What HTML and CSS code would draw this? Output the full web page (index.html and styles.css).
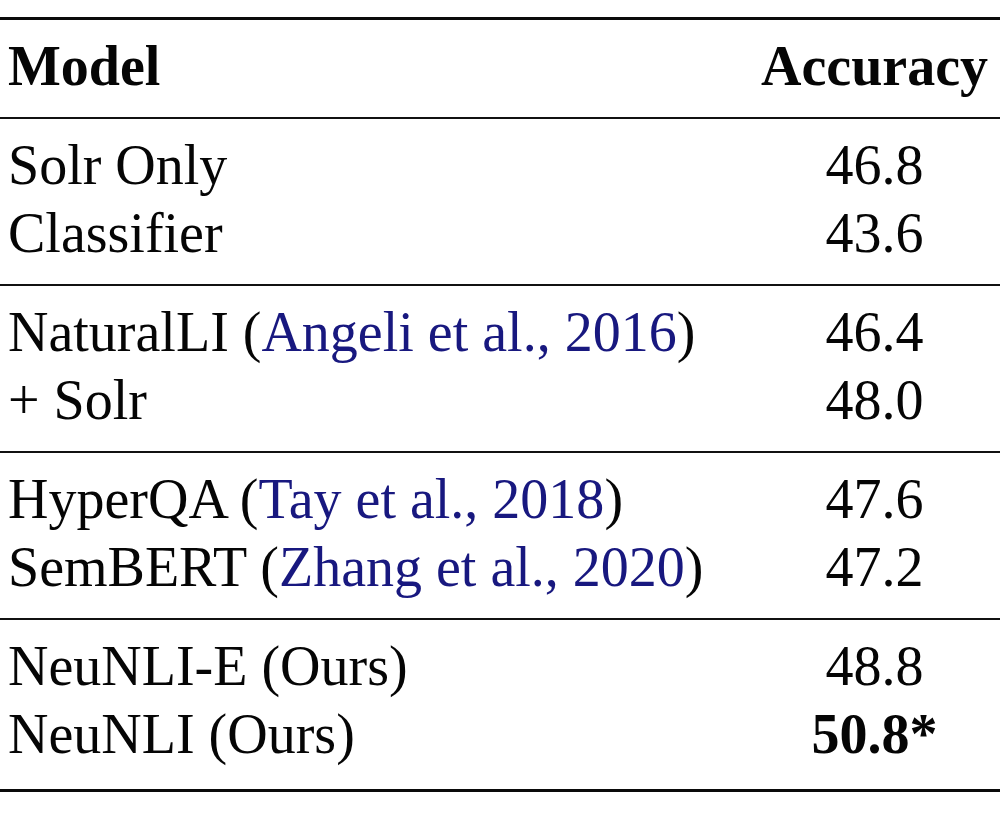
FILE: index.html
```html
<!DOCTYPE html>
<html lang="en">
<head>
    <meta charset="UTF-8">
    <title>Results</title>
    <link rel="stylesheet" href="styles.css">
</head>
<body>
    <div class="table">
        <div class="head row">
            <span class="model">Model</span>
            <span class="score">Accuracy</span>
        </div>
        <div class="group">
            <div class="row"><span class="model">Solr Only</span><span class="score">46.8</span></div>
            <div class="row"><span class="model">Classifier</span><span class="score">43.6</span></div>
        </div>
        <div class="group">
            <div class="row"><span class="model">NaturalLI (<span class="cite">Angeli et al., 2016</span>)</span><span class="score">46.4</span></div>
            <div class="row"><span class="model">+ Solr</span><span class="score">48.0</span></div>
        </div>
        <div class="group">
            <div class="row"><span class="model">HyperQA (<span class="cite">Tay et al., 2018</span>)</span><span class="score">47.6</span></div>
            <div class="row"><span class="model">SemBERT (<span class="cite">Zhang et al., 2020</span>)</span><span class="score">47.2</span></div>
        </div>
        <div class="group last">
            <div class="row"><span class="model">NeuNLI-E (Ours)</span><span class="score">48.8</span></div>
            <div class="row"><span class="model">NeuNLI (Ours)</span><span class="score best">50.8*</span></div>
        </div>
    </div>
</body>
</html>
```

FILE: styles.css
```css
body {
    margin: 0;
    background-color: #ffffff;
    font-family: 'Liberation Serif', 'Times New Roman', serif;
    color: #050505;
}
.table {
    margin-top: 17px;
    border-top: 3px solid #0a0a0a;
    border-bottom: 3px solid #0a0a0a;
}
.row {
    display: flex;
    justify-content: space-between;
    font-size: 56px;
    line-height: 68px;
    padding: 0 12px 0 8px;
    white-space: nowrap;
}
.head {
    font-weight: bold;
    padding-top: 12px;
    padding-bottom: 17px;
}
.group {
    border-top: 2px solid #111;
    padding-top: 12px;
    padding-bottom: 17px;
}
.group.last {
    padding-bottom: 21px;
}
.score {
    width: 227px;
    text-align: center;
}
.best {
    font-weight: bold;
}
.cite {
    color: #18187f;
}
```
